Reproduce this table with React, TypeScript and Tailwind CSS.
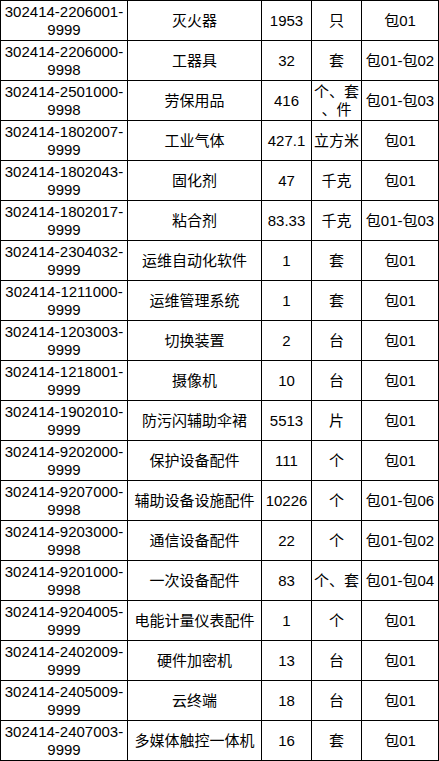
import React from "react";

type Row = { code: string; tail: string; name: string; qty: string; unit: React.ReactNode; pkg: string };

const rows: Row[] = [
  { code: "302414-2206001-", tail: "9999", name: "灭火器", qty: "1953", unit: "只", pkg: "包01" },
  { code: "302414-2206000-", tail: "9998", name: "工器具", qty: "32", unit: "套", pkg: "包01-包02" },
  {
    code: "302414-2501000-",
    tail: "9998",
    name: "劳保用品",
    qty: "416",
    unit: (
      <>
        <span className="block">个、套</span>
        <span className="block">、件</span>
      </>
    ),
    pkg: "包01-包03",
  },
  { code: "302414-1802007-", tail: "9999", name: "工业气体", qty: "427.1", unit: "立方米", pkg: "包01" },
  { code: "302414-1802043-", tail: "9999", name: "固化剂", qty: "47", unit: "千克", pkg: "包01" },
  { code: "302414-1802017-", tail: "9999", name: "粘合剂", qty: "83.33", unit: "千克", pkg: "包01-包03" },
  { code: "302414-2304032-", tail: "9999", name: "运维自动化软件", qty: "1", unit: "套", pkg: "包01" },
  { code: "302414-1211000-", tail: "9999", name: "运维管理系统", qty: "1", unit: "套", pkg: "包01" },
  { code: "302414-1203003-", tail: "9999", name: "切换装置", qty: "2", unit: "台", pkg: "包01" },
  { code: "302414-1218001-", tail: "9999", name: "摄像机", qty: "10", unit: "台", pkg: "包01" },
  { code: "302414-1902010-", tail: "9999", name: "防污闪辅助伞裙", qty: "5513", unit: "片", pkg: "包01" },
  { code: "302414-9202000-", tail: "9999", name: "保护设备配件", qty: "111", unit: "个", pkg: "包01" },
  { code: "302414-9207000-", tail: "9998", name: "辅助设备设施配件", qty: "10226", unit: "个", pkg: "包01-包06" },
  { code: "302414-9203000-", tail: "9998", name: "通信设备配件", qty: "22", unit: "个", pkg: "包01-包02" },
  { code: "302414-9201000-", tail: "9998", name: "一次设备配件", qty: "83", unit: "个、套", pkg: "包01-包04" },
  { code: "302414-9204005-", tail: "9999", name: "电能计量仪表配件", qty: "1", unit: "个", pkg: "包01" },
  { code: "302414-2402009-", tail: "9999", name: "硬件加密机", qty: "13", unit: "台", pkg: "包01" },
  { code: "302414-2405009-", tail: "9999", name: "云终端", qty: "18", unit: "台", pkg: "包01" },
  { code: "302414-2407003-", tail: "9999", name: "多媒体触控一体机", qty: "16", unit: "套", pkg: "包01" },
];

const cell =
  "h-[40px] border-r border-b border-black flex flex-col items-center justify-center text-center whitespace-nowrap overflow-hidden";

export default function App() {
  return (
    <div
      className="w-[439px] bg-white text-black text-[15px] leading-[18px]"
      style={{ fontFamily: '"Liberation Sans", "Noto Sans CJK SC", sans-serif' }}
    >
      <div className="grid grid-cols-[127px_134px_50px_50px_77px] border-l border-t border-black">
        {rows.map((r, i) => (
          <React.Fragment key={i}>
            <div className={cell}>
              <span className="block">{r.code}</span>
              <span className="block">{r.tail}</span>
            </div>
            <div className={cell}>{r.name}</div>
            <div className={cell}>{r.qty}</div>
            <div className={cell}>{r.unit}</div>
            <div className={cell}>{r.pkg}</div>
          </React.Fragment>
        ))}
      </div>
    </div>
  );
}
